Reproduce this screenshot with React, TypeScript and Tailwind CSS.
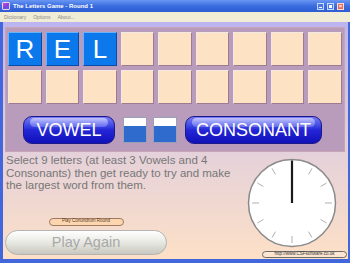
import React from "react";

const FONT = { fontFamily: '"Liberation Sans", Arial, sans-serif' };

const letters = ["R", "E", "L", "", "", "", "", "", "", "", "", "", "", "", "", "", "", ""];

const Clock = () => {
  const ticks = Array.from({ length: 11 }, (_, i) => (i + 1) * 30);
  return (
    <svg width="96" height="96" viewBox="0 0 96 96">
      <circle cx="48" cy="48" r="43.5" fill="#ffffff" stroke="#8a8a8a" strokeWidth="1.5" />
      {ticks.map((deg) => {
        const rad = (deg * Math.PI) / 180;
        const x1 = 48 + Math.sin(rad) * 33;
        const y1 = 48 - Math.cos(rad) * 33;
        const x2 = 48 + Math.sin(rad) * 40;
        const y2 = 48 - Math.cos(rad) * 40;
        return <line key={deg} x1={x1} y1={y1} x2={x2} y2={y2} stroke="#b0b0b0" strokeWidth="1" />;
      })}
      <line x1="48" y1="48" x2="48" y2="5.5" stroke="#1a1a1a" strokeWidth="2.2" />
    </svg>
  );
};

const PillButton = ({ label, width }: { label: string; width: string }) => (
  <div
    className={`${width} h-[28px] relative rounded-[9px] border border-[#1a1a8a] bg-gradient-to-b from-[#7a7af4] via-[#2525d8] to-[#1010b8] flex items-center justify-center overflow-hidden`}
  >
    <div className="absolute top-[1px] left-[6px] right-[6px] h-[9px] rounded-full bg-gradient-to-b from-[#d8d8ff] to-[#7070f0] opacity-80" />
    <span className="relative text-white text-[18px] leading-none" style={FONT}>
      {label}
    </span>
  </div>
);

const CountBox = () => (
  <div className="w-[24px] h-[26px] border border-[#9aa0b8] flex flex-col">
    <div className="h-[8px] bg-white" />
    <div className="flex-1 bg-[#2f6bcc]" />
  </div>
);

export default function App() {
  return (
    <div className="w-[350px] h-[263px] flex flex-col overflow-hidden" style={FONT}>
      {/* title bar */}
      <div className="h-[12px] flex items-center bg-gradient-to-b from-[#6a96f2] via-[#3a6ce0] to-[#2e5cd2] px-[2px]">
        <div className="w-[8px] h-[8px] rounded-[1px] bg-gradient-to-br from-[#e040c0] via-[#8040e0] to-[#4060f0] border border-[#f0d0f0]" />
        <span className="ml-[3px] text-white font-bold text-[6px] leading-none">The Letters Game - Round 1</span>
        <div className="flex-1" />
        <div className="flex gap-[3px] mr-[4px]">
          <div className="w-[7px] h-[7px] bg-[#4a7ae8] border border-[#c8d8ff] flex items-end justify-center pb-[1px]">
            <div className="w-[3px] h-[1px] bg-white" />
          </div>
          <div className="w-[7px] h-[7px] bg-[#4a7ae8] border border-[#c8d8ff] p-[1px]">
            <div className="w-full h-full border border-white border-t-2" />
          </div>
          <div className="w-[7px] h-[7px] bg-[#e06a5a] border border-[#ffd8d0] flex items-center justify-center text-white text-[6px] leading-none font-bold">
            ×
          </div>
        </div>
      </div>
      {/* menu bar */}
      <div className="h-[10px] bg-[#f0ecd6] flex items-center gap-[7px] px-[4px] text-[5px] text-[#8a8a8a] leading-none">
        <span>Dictionary</span>
        <span>Options</span>
        <span>About...</span>
      </div>
      {/* body */}
      <div className="flex-1 flex flex-col border-l-[3px] border-r-[2px] border-b-[4px] border-[#4266dc] bg-gradient-to-b from-[#bcb4f0] via-[#e2cfdc] to-[#fde0c6]">
        <div className="ml-[2px] mr-[3px] mt-[5px] h-[125px] bg-[#b99bbb] border border-[#c8a4b4] px-[2px] pt-[4px]">
          <div className="grid grid-cols-9 gap-x-[4px] gap-y-[4px]">
            {letters.map((ch, i) =>
              ch ? (
                <div
                  key={i}
                  className="h-[34px] bg-[#0b78ec] border border-t-[#6ab0ff] border-l-[#6ab0ff] border-b-[#0a4aa8] border-r-[#0a4aa8] flex items-center justify-center text-white text-[26px] leading-none"
                >
                  {ch}
                </div>
              ) : (
                <div
                  key={i}
                  className="h-[34px] bg-[#fde2c4] border border-t-[#f4e8e4] border-l-[#f4e8e4] border-b-[#9c7c90] border-r-[#9c7c90]"
                />
              )
            )}
          </div>
          <div className="flex items-center mt-[12px] ml-[15px]">
            <PillButton label="VOWEL" width="w-[92px]" />
            <div className="ml-[8px]">
              <CountBox />
            </div>
            <div className="ml-[6px]">
              <CountBox />
            </div>
            <div className="ml-[8px]">
              <PillButton label="CONSONANT" width="w-[137px]" />
            </div>
          </div>
        </div>
        <div className="flex-1 flex">
          <div className="w-[241px] flex flex-col">
            <p className="mt-[2px] pl-[3px] pr-[6px] text-[11.5px] leading-[12.5px] text-[#777777]">
              Select 9 letters (at least 3 Vowels and 4 Consonants) then get ready to try and make the largest word from them.
            </p>
            <div className="w-[162px] ml-[2px] flex flex-col items-center">
              <div className="mt-[26px] w-[75px] h-[8px] rounded-full bg-[#fcd6ae] border border-[#a07a60] flex items-center justify-center text-[4.5px] leading-none text-[#5a3a2a]">
                Play Conundrum Round
              </div>
              <div className="mt-[4px] w-[162px] h-[25px] rounded-full border border-[#b4b4b4] bg-gradient-to-b from-[#ffffff] via-[#e8e8e2] to-[#c8c8c0] flex items-center justify-center text-[14.5px] leading-none text-[#a8a8a8]">
                Play Again
              </div>
            </div>
          </div>
          <div className="flex-1 flex flex-col">
            <div className="mt-[3px]">
              <Clock />
            </div>
            <div className="self-end mr-[1px] w-[85px] h-[7px] rounded-full border border-[#6a6a6a] bg-[#fde6d0] flex items-center justify-center text-[4.5px] leading-none text-[#333333]">
              http://www.CSFsoftware.co.uk
            </div>
          </div>
        </div>
      </div>
    </div>
  );
}
